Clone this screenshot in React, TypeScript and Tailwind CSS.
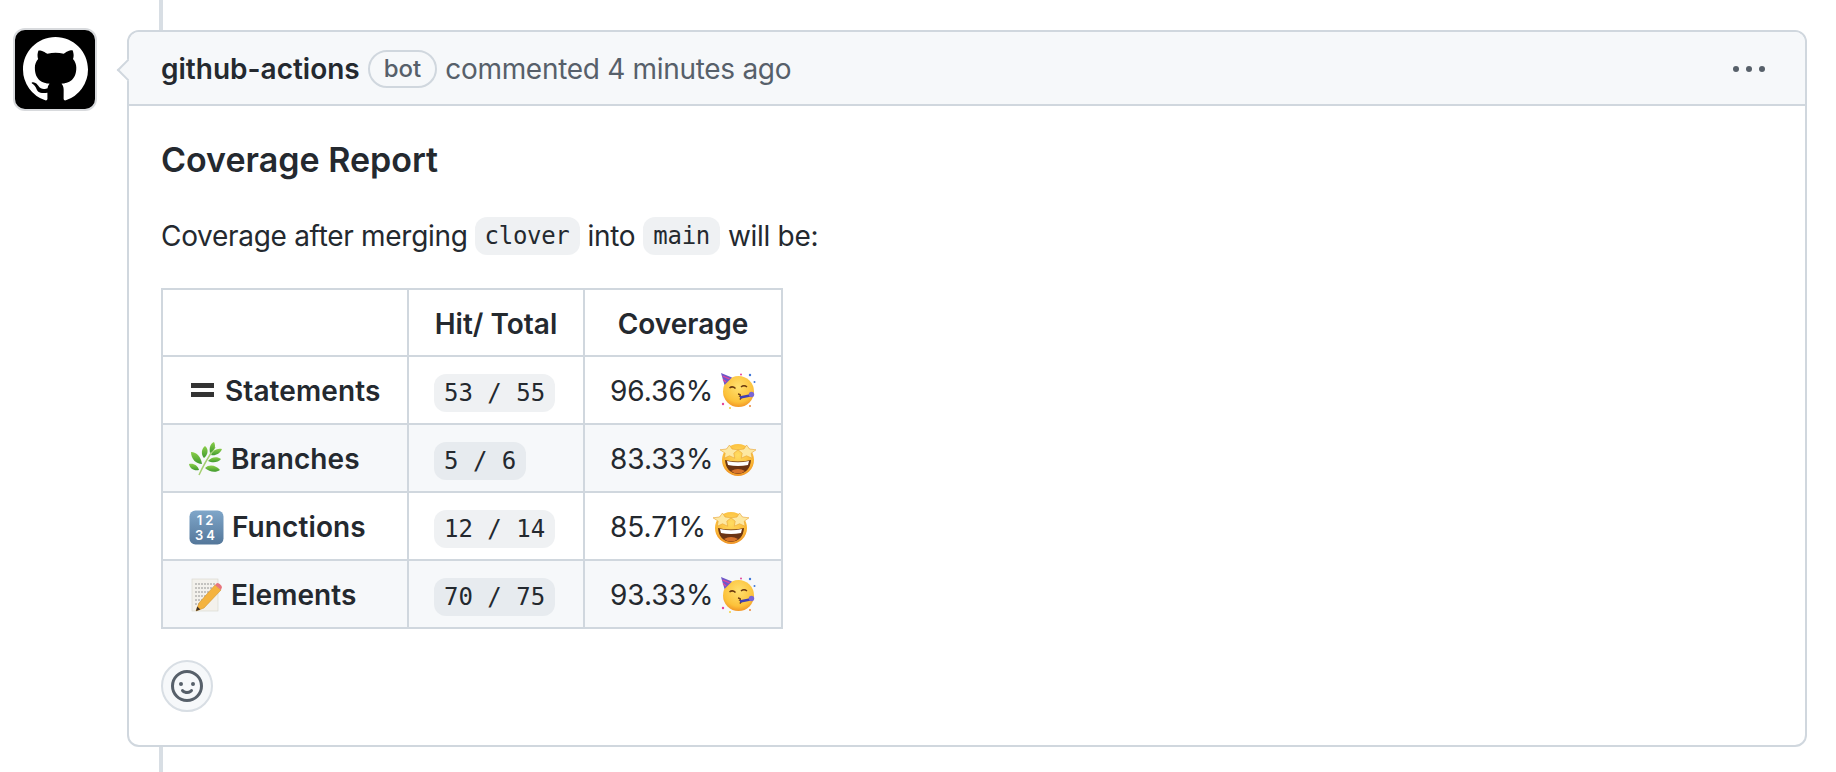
import type { ReactNode } from "react";

const sans = "font-['Inter',sans-serif]";

function MarkGithub({ className }: { className?: string }) {
  return (
    <svg viewBox="0 0 16 16" className={className} fill="currentColor">
      <path d="M8 0c4.42 0 8 3.58 8 8a8.013 8.013 0 0 1-5.45 7.59c-.4.08-.55-.17-.55-.38 0-.27.01-1.13.01-2.2 0-.75-.25-1.23-.54-1.48 1.78-.2 3.65-.88 3.65-3.95 0-.88-.31-1.59-.82-2.15.08-.2.36-1.02-.08-2.12 0 0-.67-.22-2.2.82-.64-.18-1.32-.27-2-.27-.68 0-1.36.09-2 .27-1.53-1.03-2.2-.82-2.2-.82-.44 1.1-.16 1.92-.08 2.12-.51.56-.82 1.28-.82 2.15 0 3.06 1.86 3.75 3.64 3.95-.23.2-.44.55-.51 1.07-.46.21-1.61.55-2.33-.66-.15-.24-.6-.83-1.23-.82-.67.01-.27.38.01.53.34.19.73.9.82 1.13.16.45.68 1.31 2.69.94 0 .67.01 1.3.01 1.49 0 .21-.15.45-.55.38A7.995 7.995 0 0 1 0 8c0-4.42 3.58-8 8-8Z" />
    </svg>
  );
}

function Smiley() {
  return (
    <svg viewBox="0 0 16 16" className="w-8 h-8 text-[#57606a]" fill="currentColor">
      <path d="M8 0a8 8 0 1 1 0 16A8 8 0 0 1 8 0ZM1.5 8a6.5 6.5 0 1 0 13 0 6.5 6.5 0 0 0-13 0Zm3.82 1.636a.75.75 0 0 1 1.038.175l.007.009c.103.118.22.222.35.31.264.178.683.37 1.285.37.602 0 1.02-.192 1.285-.371.13-.088.247-.192.35-.31l.007-.008a.75.75 0 0 1 1.222.87l-.022-.015c.02.013.021.015.021.015v.001l-.001.002-.002.003-.005.007-.014.019a2.066 2.066 0 0 1-.184.213c-.16.166-.338.316-.53.445-.63.418-1.37.638-2.127.629-.946 0-1.652-.308-2.126-.63a3.331 3.331 0 0 1-.715-.657l-.014-.02-.005-.006-.002-.003v-.002h-.001l.613-.432-.614.43a.75.75 0 0 1 .183-1.044ZM12 7a1 1 0 1 1-2 0 1 1 0 0 1 2 0ZM5 8a1 1 0 1 1 0-2 1 1 0 0 1 0 2Z" />
    </svg>
  );
}

function Kebab() {
  return (
    <svg viewBox="0 0 32 32" className="w-8 h-8 text-[#57606a]" fill="currentColor">
      <circle cx="3" cy="16" r="3" />
      <circle cx="16" cy="16" r="3" />
      <circle cx="29" cy="16" r="3" />
    </svg>
  );
}

function EqualsEmoji() {
  return (
    <svg viewBox="0 0 28 24" className="w-7 h-6 shrink-0">
      <rect x="2" y="4" width="23" height="5" fill="#333" />
      <rect x="2" y="13" width="23" height="5" fill="#333" />
    </svg>
  );
}

function LeafEmoji() {
  return (
    <svg viewBox="0 0 34 34" className="w-[34px] h-[34px] shrink-0">
      <defs>
        <linearGradient id="leaf" x1="0" y1="0" x2="0" y2="1">
          <stop offset="0" stopColor="#8ccf4a" />
          <stop offset="1" stopColor="#3f9a2e" />
        </linearGradient>
      </defs>
      <path d="M10 33C14 24 20 14 26 5" stroke="#a5cf72" strokeWidth="1.5" fill="none" />
      <g fill="url(#leaf)">
        <path d="M16 4c4 3 3 9-1 12-3-3-3-9 1-12Z" />
        <path d="M25 0c2 4 1 8-4 11-1-5 0-9 4-11Z" />
        <path d="M33 7c-2 5-7 7-11 6 2-5 6-7 11-6Z" />
        <path d="M32 17c-3 4-9 4-13 2 3-4 9-5 13-2Z" />
        <path d="M31 28c-4 3-11 2-15-2 4-4 11-3 15 2Z" />
        <path d="M2 10c6 0 10 5 11 12-6 0-11-5-11-12Z" />
        <path d="M0 22c5-1 9 2 10 6-5 1-9-1-10-6Z" />
      </g>
    </svg>
  );
}

function NumbersEmoji() {
  return (
    <svg viewBox="0 0 35 35" className="w-[35px] h-[35px] shrink-0">
      <defs>
        <linearGradient id="keycap" x1="0" y1="0" x2="0" y2="1">
          <stop offset="0" stopColor="#7fa6c9" />
          <stop offset="1" stopColor="#54779a" />
        </linearGradient>
      </defs>
      <rect x="0.5" y="0.5" width="34" height="34" rx="6" fill="url(#keycap)" />
      <text x="17.5" y="15" textAnchor="middle" fontSize="13" fontWeight="600" fill="#fff" letterSpacing="3" fontFamily="Inter, sans-serif">12</text>
      <text x="17.5" y="30" textAnchor="middle" fontSize="13" fontWeight="600" fill="#fff" letterSpacing="3" fontFamily="Inter, sans-serif">34</text>
    </svg>
  );
}

function MemoEmoji() {
  return (
    <svg viewBox="0 0 34 34" className="w-[34px] h-[34px] shrink-0">
      <rect x="3" y="1" width="26" height="32" fill="#f3f1ec" stroke="#d8d5cd" strokeWidth="0.6" />
      <g stroke="#8b8b8b" strokeWidth="0.9" strokeDasharray="2 1">
        <path d="M6 6h20M6 10h20M6 14h18M6 18h14M6 22h10M6 26h6" />
      </g>
      <path d="M26 7l6 5-17 18-8 3 3-8Z" fill="#f4b33f" stroke="#c98b22" strokeWidth="0.5" />
      <path d="M26 7l2-2q3 0 5 4l-1 3Z" fill="#e8747c" />
      <path d="M7 33l1.200-4.400 3.200 2.800Z" fill="#3f3226" />
    </svg>
  );
}

function PartyEmoji() {
  return (
    <svg viewBox="0 0 36 36" className="w-9 h-9 shrink-0">
      <defs>
        <radialGradient id="partyFace" cx="0.5" cy="0.35" r="0.7">
          <stop offset="0" stopColor="#ffe070" />
          <stop offset="0.7" stopColor="#fcc23a" />
          <stop offset="1" stopColor="#ef8a1f" />
        </radialGradient>
      </defs>
      <circle cx="18.500" cy="18.500" r="15.500" fill="url(#partyFace)" />
      <path d="M1 0l11 4.500-7.500 7.500Z" fill="#6d58c9" />
      <path d="M2.500 3l7 2.800M3 6.500l3 2.500" stroke="#e6459a" strokeWidth="1.300" />
      <path d="M9.500 15q3-2.500 6 0.500M21 14q3-2.500 6 0" stroke="#6b3a10" strokeWidth="1.500" fill="none" />
      <path d="M18 21q3.500 .5 1.800 2.200q2.700 1 0 3.300" stroke="#6b3a10" strokeWidth="1.400" fill="none" />
      <path d="M20 24.500l10-2" stroke="#3f3fb5" strokeWidth="2.600" />
      <circle cx="31.500" cy="21.500" r="2.700" fill="#7a66d4" />
      <circle cx="30" cy="2" r="1.200" fill="#3f76d8" />
      <circle cx="21" cy="1.500" r="1" fill="#e6459a" />
      <circle cx="34.500" cy="9" r="1" fill="#3f76d8" />
      <circle cx="3" cy="31" r="1.200" fill="#e6459a" />
      <circle cx="10" cy="35" r="1" fill="#f4d03f" />
      <circle cx="30" cy="33" r="1" fill="#e8893a" />
    </svg>
  );
}

function StarEmoji() {
  return (
    <svg viewBox="0 0 36 36" className="w-9 h-9 shrink-0">
      <defs>
        <radialGradient id="starFace" cx="0.5" cy="0.35" r="0.7">
          <stop offset="0" stopColor="#ffdc62" />
          <stop offset="0.7" stopColor="#fbb835" />
          <stop offset="1" stopColor="#ea8420" />
        </radialGradient>
      </defs>
      <circle cx="18" cy="19" r="16" fill="url(#starFace)" />
      <path d="M5 19q13 3 26 0q-1 13-13 14q-12-1-13-14Z" fill="#6b3413" />
      <path d="M7 20q11 2.500 22 0l-1 4q-10 2-20 0Z" fill="#fff" />
      <path d="M11 30q7-4 14 0q-3 2.500-7 2.500q-4 0-7-2.500Z" fill="#d9752c" />
      <path d="M9.500 4l2.500 4 6 .8-4.200 3.400.9 5-5.200-2.400-5.200 2.400.9-5L0 8.800l6.500-.8Z" fill="#fde8a2" stroke="#e8a234" strokeWidth="0.600" />
      <path d="M26.500 4l3 4 6.500.8-4.800 3.400.9 5-5.600-2.400-5.200 2.400.9-5L18 8.800l6-.8Z" fill="#fde8a2" stroke="#e8a234" strokeWidth="0.600" />
    </svg>
  );
}

function Code({ children }: { children: ReactNode }) {
  return (
    <code className="inline-block rounded-[12px] bg-[#afb8c133] px-[10px] text-[24px] leading-[38px] whitespace-nowrap font-['DejaVu_Sans_Mono',monospace]">
      {children}
    </code>
  );
}

const rows = [
  { icon: <EqualsEmoji />, label: "Statements", count: "53 / 55", pct: "96.36%", face: <PartyEmoji /> },
  { icon: <LeafEmoji />, label: "Branches", count: "5 / 6", pct: "83.33%", face: <StarEmoji /> },
  { icon: <NumbersEmoji />, label: "Functions", count: "12 / 14", pct: "85.71%", face: <StarEmoji /> },
  { icon: <MemoEmoji />, label: "Elements", count: "70 / 75", pct: "93.33%", face: <PartyEmoji /> },
];

const cell = "border-2 border-[#d0d7de] px-[25px] pt-[2px] pb-0";

export default function App() {
  return (
    <div className={`${sans} w-[1836px] h-[772px] overflow-hidden bg-white text-[#24292f] text-[28px] flex`}>
      <div className="w-[127px] shrink-0 pl-[13px] pt-[28px]">
        <div className="w-[84px] h-[83px] rounded-[12px] bg-black border-2 border-[#d8dadd] flex items-center justify-center text-white">
          <MarkGithub className="w-[65px] h-[65px]" />
        </div>
      </div>
      <div className="w-[1680px] shrink-0 flex flex-col">
        <div className="ml-[32px] w-1 h-[30px] bg-[#d8dee4]" />
        <div className="relative h-[717px] rounded-[12px] border-2 border-[#d0d7de]">
          {/* caret */}
          <div className="absolute left-[-9px] top-[30px] w-4 h-4 rotate-45 bg-[#f6f8fa] border-l-2 border-b-2 border-[#d0d7de]" />
          <div className="relative h-[74px] rounded-t-[10px] bg-[#f6f8fa] border-b-2 border-[#d0d7de] pl-[32px] pr-[40px] pt-[2px] flex items-center">
            <span className="font-semibold">github-actions</span>
            <span className="ml-[8px] h-[38px] px-[14px] rounded-full border-2 border-[#d0d7de] text-[24px] font-medium text-[#57606a] flex items-center">
              bot
            </span>
            <span className="ml-[8px] text-[#57606a] tracking-[-0.3px]">commented 4 minutes ago</span>
            <div className="ml-auto flex items-center">
              <Kebab />
            </div>
          </div>
          <div className="pl-[32px] pt-[32px]">
            <h3 className="text-[34px] leading-[44px] font-semibold">Coverage Report</h3>
            <p className="mt-[33px] leading-[42px] flex items-center gap-[8px] tracking-[-0.3px]">
              <span className="-mr-px">Coverage after merging</span>
              <Code>clover</Code>
              <span>into</span>
              <Code>main</Code>
              <span>will be:</span>
            </p>
            <table className="mt-[31px] border-collapse table-fixed w-[622px]">
              <thead>
                <tr className="h-[67px]">
                  <th className={`${cell} w-[246px]`}></th>
                  <th className={`${cell} w-[176px] font-semibold whitespace-nowrap`}>Hit/ Total</th>
                  <th className={`${cell} w-[198px] font-semibold`}>Coverage</th>
                </tr>
              </thead>
              <tbody>
                {rows.map((row, i) => (
                  <tr key={row.label} className={`h-[68px] ${i % 2 === 0 ? "bg-white" : "bg-[#f6f8fa]"}`}>
                    <td className={`${cell} font-semibold whitespace-nowrap`}>
                      <div className="flex items-center gap-[8px] ml-px tracking-[0.1px]">
                        {row.icon}
                        {row.label}
                      </div>
                    </td>
                    <td className={cell}>
                      <Code>{row.count}</Code>
                    </td>
                    <td className={`${cell} whitespace-nowrap`}>
                      <div className="flex items-center gap-[7px]">
                        {row.pct}
                        {row.face}
                      </div>
                    </td>
                  </tr>
                ))}
              </tbody>
            </table>
            <button className="mt-[31px] w-[52px] h-[52px] rounded-full bg-[#f6f8fa] border-2 border-[#d8dee4] flex items-center justify-center">
              <Smiley />
            </button>
          </div>
        </div>
        <div className="ml-[32px] w-1 flex-1 bg-[#d8dee4]" />
      </div>
    </div>
  );
}
